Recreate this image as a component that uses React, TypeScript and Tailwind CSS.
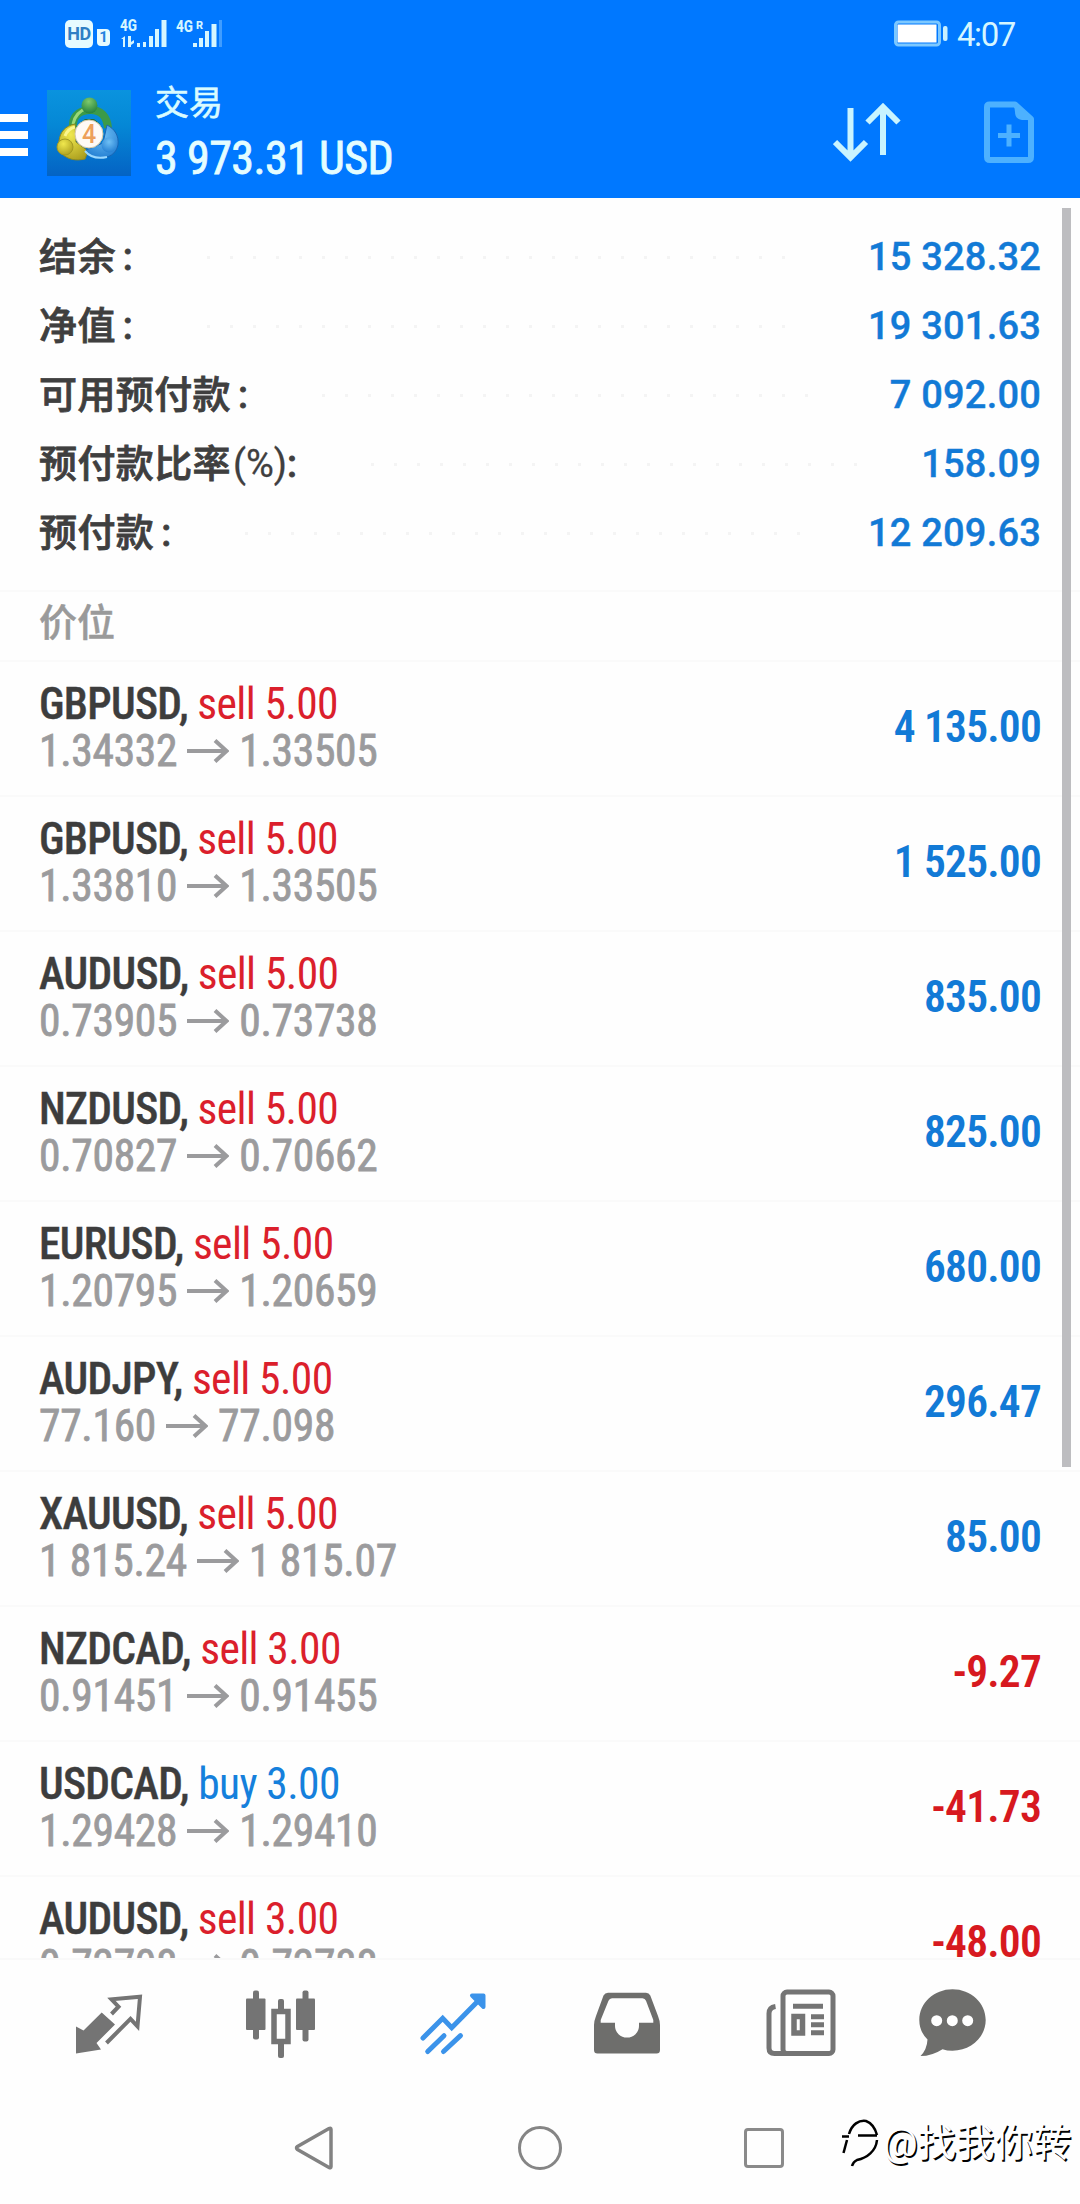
import React from "react";

interface SummaryItem {
  label: string;
  suffix?: string;
  value: string;
}

interface Position {
  symbol: string;
  side: "sell" | "buy";
  volume: string;
  open: string;
  current: string;
  profit: string;
}

const summary: SummaryItem[] = [
  { label: "结余", value: "15 328.32" },
  { label: "净值", value: "19 301.63" },
  { label: "可用预付款", value: "7 092.00" },
  { label: "预付款比率", suffix: "(%)", value: "158.09" },
  { label: "预付款", value: "12 209.63" },
];

const positions: Position[] = [
  { symbol: "GBPUSD", side: "sell", volume: "5.00", open: "1.34332", current: "1.33505", profit: "4 135.00" },
  { symbol: "GBPUSD", side: "sell", volume: "5.00", open: "1.33810", current: "1.33505", profit: "1 525.00" },
  { symbol: "AUDUSD", side: "sell", volume: "5.00", open: "0.73905", current: "0.73738", profit: "835.00" },
  { symbol: "NZDUSD", side: "sell", volume: "5.00", open: "0.70827", current: "0.70662", profit: "825.00" },
  { symbol: "EURUSD", side: "sell", volume: "5.00", open: "1.20795", current: "1.20659", profit: "680.00" },
  { symbol: "AUDJPY", side: "sell", volume: "5.00", open: "77.160", current: "77.098", profit: "296.47" },
  { symbol: "XAUUSD", side: "sell", volume: "5.00", open: "1 815.24", current: "1 815.07", profit: "85.00" },
  { symbol: "NZDCAD", side: "sell", volume: "3.00", open: "0.91451", current: "0.91455", profit: "-9.27" },
  { symbol: "USDCAD", side: "buy", volume: "3.00", open: "1.29428", current: "1.29410", profit: "-41.73" },
  { symbol: "AUDUSD", side: "sell", volume: "3.00", open: "0.73708", current: "0.73788", profit: "-48.00" },
];

function StatusBar() {
  return (
    <div className="flex h-[66px] items-center justify-between pl-[65px] pr-[65px] text-[#d5f6ff]">
      <div className="flex h-[30px] items-end">
        <div className="flex h-7 w-7 items-center justify-center rounded-[5px] bg-[#e6fbff] text-[18px] font-bold leading-none tracking-[-0.5px] text-[#2f7fc4]">
          HD
        </div>
        <div className="mb-[2px] ml-1 flex h-[17px] w-[13px] items-center justify-center rounded-[4px] rounded-tl-none bg-[#e6fbff] text-[15px] font-bold leading-none text-[#2383e0]">
          1
        </div>
        <svg className="ml-[10px] h-[30px] w-[48px] overflow-visible" viewBox="0 0 48 30" fill="currentColor">
          <text x="0" y="13" fontSize="16" fontWeight="800" textLength="17" lengthAdjust="spacingAndGlyphs">4G</text>
          <path d="M1 21l4-3v11H3v-8zM8 18h3v6l3-2v3l-3 2v2H8zM17 25h3v4h-3z" />
          <path d="M23 24h3v5h-3zM29 18h4v11h-4zM35 11h4v18h-4zM41.500 2h5v27h-5z" />
        </svg>
        <svg className="ml-2 h-[30px] w-[48px] overflow-visible" viewBox="0 0 48 30" fill="currentColor">
          <text x="0" y="14" fontSize="17" fontWeight="800" textLength="17" lengthAdjust="spacingAndGlyphs">4G</text>
          <text x="20" y="11" fontSize="11" fontWeight="800" textLength="7">R</text>
          <path d="M17 25h4v4h-4zM23 20h4v9h-4zM29 13h4v16h-4zM35.500 6h5v23h-5z" />
          <path d="M43 2h3v27h-3z" opacity="0.3" />
        </svg>
      </div>
      <div className="flex items-center">
        <svg className="mr-[8px] h-[28px] w-[56px]" viewBox="0 0 56 28" fill="none">
          <rect x="2.500" y="3" width="44" height="23" rx="3" stroke="#7cc8ff" strokeWidth="3" />
          <rect x="4.500" y="5.500" width="39" height="18" fill="#ffffff" />
          <rect x="50" y="7" width="4.500" height="15" rx="2" fill="#c8f0ff" />
        </svg>
        <span className="mt-[2px] text-[33px] leading-none tracking-[-1.4px]">4:07</span>
      </div>
    </div>
  );
}

function AppLogo() {
  return (
    <svg className="h-[86px] w-[84px]" viewBox="0 0 84 86">
      <defs>
        <linearGradient id="tile" x1="0" y1="0" x2="0" y2="1">
          <stop offset="0" stopColor="#0a93de" />
          <stop offset="0.4" stopColor="#0588d6" />
          <stop offset="1" stopColor="#0463c4" />
        </linearGradient>
        <radialGradient id="green" cx="0.45" cy="0.25" r="0.8">
          <stop offset="0" stopColor="#7fca6c" />
          <stop offset="1" stopColor="#1d7d3a" />
        </radialGradient>
        <radialGradient id="yellow" cx="0.4" cy="0.3" r="0.8">
          <stop offset="0" stopColor="#f0e84e" />
          <stop offset="1" stopColor="#a89b1c" />
        </radialGradient>
        <radialGradient id="blue" cx="0.5" cy="0.3" r="0.8">
          <stop offset="0" stopColor="#6fc0f5" />
          <stop offset="1" stopColor="#1c78cf" />
        </radialGradient>
      </defs>
      <rect width="84" height="86" fill="url(#tile)" />
      {/* three figures linked around the medallion */}
      <path d="M26 38C25 28 30 21 42 20s18 7 19 18" fill="none" stroke="#3c9a48" strokeWidth="8" />
      <path d="M26 34C28 25 34 20 41 18" fill="none" stroke="#9ad878" strokeWidth="3" />
      <path d="M32 34l6-5h9l6 5-4 6H36z" fill="#256f39" />
      <circle cx="42.500" cy="15.500" r="8" fill="url(#green)" />
      <path d="M28 34c-10 2-15 8-16 17l2 12c7 7 15 8 24 6l3-8-12-9z" fill="url(#yellow)" stroke="#8d8a20" />
      <path d="M18 46c2-5 5-8 10-9" fill="none" stroke="#fbf68c" strokeWidth="3" />
      <circle cx="18" cy="57" r="8" fill="url(#yellow)" stroke="#a39a22" />
      <path d="M60 35c8 4 12 11 11 20-2 9-9 13-18 13-7 0-11-3-14-8l17-7z" fill="url(#blue)" stroke="#1a66b4" />
      <path d="M38 61c5 6 13 8 22 6" fill="none" stroke="#9ad8ff" strokeWidth="2" />
      <circle cx="62" cy="55" r="7.500" fill="url(#blue)" />
      <circle cx="42" cy="44" r="14" fill="#fffaf5" stroke="#d5c9a8" />
      <text x="42" y="53" textAnchor="middle" fontSize="25" fontWeight="500" fill="#eda05a">4</text>
    </svg>
  );
}

function Header() {
  return (
    <header className="h-[198px] bg-[#0078ff]">
      <StatusBar />
      <div className="flex h-[132px] items-start">
        <div className="mt-12 flex w-7 flex-col gap-[9px]">
          <span className="h-[8px] bg-white" />
          <span className="h-[8px] bg-white" />
          <span className="h-[8px] bg-white" />
        </div>
        <div className="ml-[19px] mt-[24px]">
          <AppLogo />
        </div>
        <div className="ml-[24px] mt-[14px] flex flex-1 flex-col text-[#d9fbff]">
          <span className="text-[34px] leading-[46px] [-webkit-text-stroke:0.6px_#d9fbff]">交易</span>
          <span className="cond mt-[2px] text-[46px] leading-[60px] tracking-[-0.6px] text-[#e4fdff] [-webkit-text-stroke:0.8px_#e4fdff]">
            3 973.31 USD
          </span>
        </div>
        <svg className="mt-[36px] h-[60px] w-[68px]" viewBox="0 0 68 60" fill="none" stroke="#c9f4ff" strokeWidth="6">
          <path d="M17.500 6v49M2 40l15.500 15.500L33 40M50 53V6M34.500 20.500L50 5l15.500 15.500" />
        </svg>
        <svg className="ml-[82px] mr-[45px] mt-[34px] h-[64px] w-[52px]" viewBox="0 0 52 64" fill="none" stroke="#4db1ff" strokeWidth="6">
          <path d="M6 4.500h26L48 19v38q0 3-3 3H7q-3 0-3-3V7q0-2.500 2.500-2.500z" strokeLinejoin="round" />
          <path d="M31 4l18 16H39q-7-1-7-8z" fill="#4db1ff" stroke="none" />
          <path d="M15 35.500h22M26 24.500v22" strokeWidth="5" />
        </svg>
      </div>
    </header>
  );
}

function SummaryRow({ item }: { item: SummaryItem }) {
  return (
    <div className="flex h-[69px] items-center">
      <span className="flex text-[38px] font-medium text-[#3f3f3f] [-webkit-text-stroke:0.8px_#3f3f3f]">
        <span className="tracking-[0.4px]">{item.label}</span>
        {item.suffix && <span className="ml-[2px] font-normal [-webkit-text-stroke:0.3px_#3f3f3f]">{item.suffix}</span>}
        <span className={item.suffix ? "" : "ml-[7px]"}>:</span>
      </span>
      <span className="mx-16 h-[3px] flex-1 bg-[radial-gradient(circle,#f4f4f4_1.5px,transparent_1.5px)] bg-[length:23px_3px]" />
      <span className="text-[38px] font-medium tracking-[0.2px] text-[#127ad6] [-webkit-text-stroke:0.4px_#127ad6]">{item.value}</span>
    </div>
  );
}

function PositionRow({ item }: { item: Position }) {
  const sideColor = item.side === "sell" ? "text-[#db1f2c]" : "text-[#1580dc]";
  const profitColor = item.profit.startsWith("-") ? "text-[#d7191f]" : "text-[#127ad6]";
  return (
    <div className="cond flex h-[135px] shrink-0 items-center justify-between border-t-2 border-[#fafafa] pb-[2px] pl-[39px] pr-[39px] text-[43.500px] leading-[47px]">
      <div className="flex flex-col">
        <div className="whitespace-pre">
          <span className="font-medium tracking-[-0.7px] text-[#3d3d3d] [-webkit-text-stroke:0.4px_#3d3d3d]">{item.symbol}, </span>
          <span className={`tracking-[-0.6px] ${sideColor}`}>
            {item.side} {item.volume}
          </span>
        </div>
        <div className="flex items-center whitespace-pre tracking-[-0.3px] text-[#9b9b9d] [-webkit-text-stroke:0.8px_#9b9b9d]">
          <span>{item.open}</span>
          <svg className="mx-[10px] h-[24px] w-[42px]" viewBox="0 0 42 24" fill="none" stroke="currentColor" strokeWidth="4">
            <path d="M0 12h40M28 1.500L39.500 12 28 22.500" />
          </svg>
          <span>{item.current}</span>
        </div>
      </div>
      <span className={`font-semibold tracking-[-0.8px] ${profitColor}`}>{item.profit}</span>
    </div>
  );
}

function TabBar() {
  return (
    <nav className="flex h-[128px] items-start border-t-2 border-[#f9f9f9] pl-[72px] pt-[28px] text-[#747474]">
      <svg className="mr-[100px] h-[72px] w-[72px]" viewBox="0 0 72 72" fill="none" stroke="currentColor" strokeWidth="4">
        <path d="M4 38.500l7.500 4 18.200-18L43 36.500 24.500 55l4.500 6.500-25 4z" fill="currentColor" stroke="none" />
        <path d="M39.500 26l7-7.300-7-7.400 28.500-2.500-2.500 29.500-7-7.500L34.500 55" />
      </svg>
      <svg className="mr-[101px] h-[72px] w-[72px]" viewBox="0 0 72 72" fill="currentColor">
        <rect x="2" y="10.500" width="19.500" height="31.500" rx="1" />
        <rect x="9" y="2.500" width="6" height="49" rx="2" />
        <rect x="34" y="11" width="6" height="12" rx="2" />
        <rect x="34" y="54" width="6" height="16" rx="2" />
        <rect x="30" y="23.500" width="14" height="30" fill="none" stroke="currentColor" strokeWidth="5.500" />
        <rect x="52" y="10.500" width="19" height="31.500" rx="1" />
        <rect x="58.500" y="2.500" width="6" height="51" rx="2" />
      </svg>
      <svg className="mr-[101px] h-[72px] w-[72px]" viewBox="0 0 72 72" fill="none" stroke="#3b93ea" strokeWidth="5" strokeLinecap="round">
        <path d="M6 50l19.700-19.700 9 9.400L63 11" />
        <path d="M10.700 63.500L27 47.700M26.500 63.500l17-15.800" />
        <path d="M55 7.500h11.500V19z" fill="#3b93ea" strokeWidth="4" strokeLinejoin="round" />
      </svg>
      <svg className="mr-[103px] h-[72px] w-[72px]" viewBox="0 0 72 72" fill="#6e6e6c">
        <path
          fillRule="evenodd"
          d="M18 4.700h38q3 0 4.300 2.800L68 28q2 5 2 9v25q0 3.500-3.500 3.500h-59Q4 65.500 4 62V37q0-4 2-9l7.500-20.500Q15 4.700 18 4.700zM22 10.300q-2.500 0-3.500 2.500L10.700 32v2.800H25V38a12 11.500 0 0024 0v-3.200h14.300V32L56 12.800q-1-2.500-3.500-2.500z"
        />
      </svg>
      <svg className="mr-[79px] h-[72px] w-[72px]" viewBox="0 0 72 72" fill="none" stroke="currentColor" strokeWidth="5">
        <rect x="18" y="4" width="50" height="61.500" rx="4" />
        <path d="M10.500 18.500q-6.500 1-6.500 7V60q0 5.500 5.500 5.500h13" />
        <path d="M28 18.200h30M46 28.800h13M46 36.800h13M46 44.800h13" strokeWidth="5" />
        <rect x="29" y="28.500" width="8.500" height="16.500" strokeWidth="5.500" />
      </svg>
      <svg className="h-[72px] w-[72px]" viewBox="0 0 72 72" fill="#6e6e6c">
        <path d="M36.500 1.300c18.500 0 33.200 13.700 33.200 30.700S55 62.700 36.500 62.700q-5.500 0-10-1.500Q16 68 4.500 68q6.500-6.500 7-16.500-8.200-8-8.200-19.500C3.300 15 18 1.300 36.500 1.300z" />
        <circle cx="20.700" cy="32.700" r="5.500" fill="#fff" />
        <circle cx="36.300" cy="32.700" r="5.500" fill="#fff" />
        <circle cx="51.700" cy="32.700" r="5.500" fill="#fff" />
      </svg>
    </nav>
  );
}

function SystemBar() {
  return (
    <div className="flex h-[118px] items-center pl-[294px] pt-[6px]">
      <svg className="h-[48px] w-[40px]" viewBox="0 0 40 48" fill="none" stroke="#828282" strokeWidth="3.500">
        <path d="M37 5.500v37q0 2-2 1L3.500 25.500q-2-1.500 0-3L35 4.500q2-1 2 1z" />
      </svg>
      <div className="ml-[184px] h-11 w-11 rounded-full border-[3px] border-[#858585]" />
      <div className="ml-[182px] h-10 w-10 rounded-[4px] border-[3px] border-[#8a8a8a]" />
      <div className="-mt-[10px] ml-[57px] flex items-center whitespace-nowrap text-white">
        <svg className="h-[50px] w-[40px] shrink-0" viewBox="0 0 40 50" fill="none" stroke="#000" strokeWidth="2.500">
          <path d="M1 18.500h7M17 17.500h19M8 16C11 6 18 2 25 3q8 3 11 14" />
          <path d="M6 22L2.500 35" />
          <path d="M36 22c-1 11-10 18-20 20q-4 2-5 6" />
        </svg>
        <span className="ml-[2px] text-[38.500px] leading-none [text-shadow:1.5px_1.5px_0_#000]">@找我你转</span>
      </div>
    </div>
  );
}

export default function App() {
  return (
    <div className="h-[2204px] w-[1080px] overflow-hidden bg-[#fefefe] font-['Roboto','Noto_Sans_CJK_SC',sans-serif]">
      <style>{`.cond { font-family: "Roboto Condensed", Roboto, "Noto Sans CJK SC", sans-serif; font-stretch: 75%; }`}</style>
      <Header />
      <main className="relative h-[1760px] overflow-hidden">
        <section className="h-[392px] pl-[39px] pr-[39px] pt-[25px]">
          {summary.map((item) => (
            <SummaryRow key={item.label} item={item} />
          ))}
        </section>
        <div className="flex h-[70px] items-center border-t-2 border-[#fafafa] pb-[5px] pl-[39px] text-[38px] font-medium text-[#9a9a9a] [-webkit-text-stroke:0.5px_#9a9a9a]">
          价位
        </div>
        {positions.map((item, index) => (
          <PositionRow key={index} item={item} />
        ))}
        {/* scroll thumb */}
        <div className="absolute right-[9px] top-[10px] h-[1259px] w-[9px] bg-[#bdbdc0]" />
      </main>
      <TabBar />
      <SystemBar />
    </div>
  );
}
